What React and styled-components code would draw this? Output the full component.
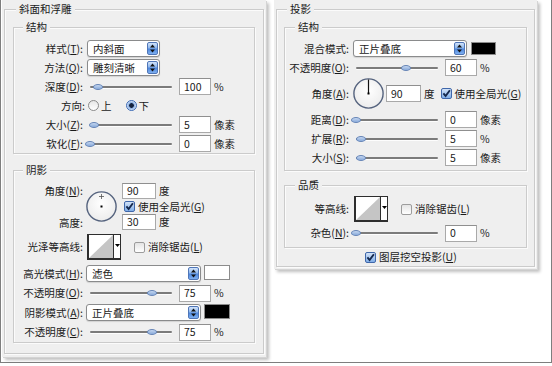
import React from 'react';
import styled, { createGlobalStyle } from 'styled-components';

const Global = createGlobalStyle`
  html, body { margin: 0; padding: 0; background: #fff; }
  body {
    font-family: "Noto Sans CJK SC", "Liberation Sans", sans-serif;
    font-size: 10.5px;
    line-height: 14px;
    color: #1a1a1a;
  }
`;

const Frame = styled.div`
  width: 552px;
  height: 363px;
  box-sizing: border-box;
  border: 1px solid #7e7e7e;
  border-top: none;
  display: flex;
  align-items: flex-start;
  gap: 8px;
  padding-left: 1px;
  background: #fff;
`;

const Panel = styled.div`
  width: ${(p) => p.$w}px;
  height: ${(p) => p.$h}px;
  box-sizing: border-box;
  flex: none;
  background: #efefef;
  padding: 1px 2px 0;
  box-shadow: 1px 1px 0 #d4d4d4, 3px 3px 3px rgba(0, 0, 0, 0.25);
`;

const Group = styled.fieldset`
  margin: ${(p) => p.$mt || 0}px 0 0;
  padding: ${(p) => p.$pad};
  border: 1px solid #cbcbcb;
  box-shadow: inset 1px 1px 0 #fbfbfb, 1px 1px 0 #fbfbfb;
  min-width: 0;
`;

const Title = styled.legend`
  padding: 0 3px;
  margin-left: ${(p) => p.$ml}px;
  line-height: 14px;
  font-size: 10.5px;
  background: #efefef;
`;

const Row = styled.div`
  display: flex;
  align-items: center;
  height: ${(p) => p.$h || 19}px;
  margin-top: ${(p) => p.$mt || 0}px;
  padding-left: ${(p) => p.$pl || 0}px;
`;

const Label = styled.span`
  flex: none;
  width: ${(p) => p.$w}px;
  margin-right: ${(p) => (p.$gap === undefined ? 4 : p.$gap)}px;
  text-align: right;
  white-space: nowrap;
`;

const Key = styled.span`
  text-decoration: underline;
`;

const SelectBox = styled.div`
  flex: none;
  width: ${(p) => p.$w}px;
  height: 17px;
  box-sizing: border-box;
  border: 1px solid #8a8b8c;
  border-radius: 3px;
  background: #fff;
  display: flex;
  align-items: center;
  justify-content: space-between;
  padding-left: 5px;
  box-shadow: 0 1px 1px rgba(0, 0, 0, 0.12);
  overflow: hidden;
  white-space: nowrap;
`;

const Stepper = styled.span`
  width: 11px;
  align-self: stretch;
  margin: 1px;
  border-radius: 2px;
  background: linear-gradient(#d3e4fa, #8db6ec 45%, #4d86dc 55%, #7fb0f0);
  border: 1px solid #4f76b8;
  box-sizing: border-box;
  display: flex;
  align-items: center;
  justify-content: center;
`;

const TextBox = styled.span`
  flex: none;
  width: ${(p) => p.$w || 32}px;
  height: ${(p) => p.$h || 17}px;
  box-sizing: border-box;
  margin-left: ${(p) => p.$ml || 0}px;
  border: 1px solid #a9a9a9;
  border-top-color: #8f8f8f;
  background: #fff;
  padding-left: 4px;
  display: flex;
  align-items: center;
`;

const Unit = styled.span`
  margin-left: ${(p) => p.$ml || 3}px;
  white-space: nowrap;
`;

const Slider = styled.div`
  position: relative;
  flex: none;
  width: 82px;
  height: 10px;
  margin: 0 7px 0 3px;
  &::before {
    content: '';
    position: absolute;
    left: 0;
    right: 0;
    top: 4px;
    height: 2px;
    border-radius: 1px;
    background: #7b7b7b;
    box-shadow: 0 1px 0 #fdfdfd;
  }
`;

const Thumb = styled.span`
  position: absolute;
  top: 2px;
  left: ${(p) => p.$x - 5}px;
  width: 10px;
  height: 6px;
  box-sizing: border-box;
  border-radius: 50%;
  background: linear-gradient(#c6d8f1, #88a9d9);
  border: 1px solid #6584b6;
`;

const Swatch = styled.span`
  flex: none;
  align-self: ${(p) => (p.$top ? 'flex-start' : 'center')};
  margin-top: ${(p) => (p.$top ? 1 : 0)}px;
  width: ${(p) => p.$w}px;
  height: ${(p) => p.$h}px;
  margin-left: ${(p) => p.$ml || 3}px;
  box-sizing: border-box;
  background: ${(p) => p.$color};
  border: 1px solid #8c8c8c;
`;

const Radio = styled.span`
  flex: none;
  width: 11px;
  height: 11px;
  box-sizing: border-box;
  border-radius: 50%;
  margin-left: ${(p) => p.$ml || 0}px;
  margin-right: 2px;
  border: 1px solid ${(p) => (p.$on ? '#3a69b5' : '#8a8a8a')};
  background: ${(p) =>
    p.$on
      ? 'radial-gradient(circle, #14233f 0 2px, #7fa6de 2.6px, #d6e5f8 4.5px)'
      : 'linear-gradient(#e6e6e6, #ffffff)'};
`;

const Check = styled.span`
  flex: none;
  width: 11px;
  height: 11px;
  box-sizing: border-box;
  border-radius: 2px;
  margin-left: ${(p) => p.$ml || 0}px;
  margin-right: 3px;
  border: 1px solid ${(p) => (p.$on ? '#3f67aa' : '#9c9c9c')};
  background: ${(p) =>
    p.$on ? 'linear-gradient(#d3e3f8, #80aee8)' : 'linear-gradient(#e4e4e4, #ffffff)'};
  display: flex;
  align-items: center;
  justify-content: center;
`;

const ContourBox = styled.div`
  flex: none;
  display: flex;
  width: 34px;
  height: 26px;
  box-sizing: border-box;
  border: 1px solid #2e2e2e;
  border-left-width: 2px;
  border-bottom-width: 2px;
  background: #fff;
`;

const ContourDrop = styled.span`
  width: 7px;
  border-left: 1px solid #2e2e2e;
  display: flex;
  justify-content: center;
  padding-top: 9px;
  box-sizing: border-box;
`;

const AngleBlock = styled.div`
  display: flex;
  align-items: center;
  height: 47px;
`;

const LabelCol = styled.div`
  flex: none;
  width: ${(p) => p.$w}px;
  margin-right: 3px;
  align-self: stretch;
  display: flex;
  flex-direction: column;
  justify-content: space-between;
  text-align: right;
  white-space: nowrap;
  padding: 1px 0 0;
  box-sizing: border-box;
`;

const FieldCol = styled.div`
  display: flex;
  flex-direction: column;
  margin-left: 5px;
  align-self: stretch;
`;

const DialWrap = styled.span`
  flex: none;
  width: 31px;
  height: 31px;
  display: block;
`;

const Arrows = () => (
  <svg width="5" height="9" viewBox="0 0 5 9">
    <polygon points="0,3.6 2.5,0.4 5,3.6" fill="#111" />
    <polygon points="0,5.4 2.5,8.6 5,5.4" fill="#111" />
  </svg>
);

const Select = ({ w, children }) => (
  <SelectBox $w={w}>
    <span>{children}</span>
    <Stepper>
      <Arrows />
    </Stepper>
  </SelectBox>
);

const Tick = () => (
  <svg width="9" height="9" viewBox="0 0 9 9">
    <path d="M1.4 4.4 L3.6 7 L7.9 1.2" stroke="#15284d" strokeWidth="1.9" fill="none" />
  </svg>
);

const Contour = () => (
  <ContourBox>
    <svg width="24" height="23" viewBox="0 0 24 23">
      <polygon points="0,23 24,0 24,23" fill="#c5c5c5" />
    </svg>
    <ContourDrop>
      <svg width="5" height="3" viewBox="0 0 5 3">
        <polygon points="0,0 5,0 2.5,3" fill="#000" />
      </svg>
    </ContourDrop>
  </ContourBox>
);

const Dial = ({ needle }) => (
  <DialWrap>
    <svg width="31" height="31" viewBox="0 0 31 31">
      <defs>
        <radialGradient id={needle ? 'dg2' : 'dg1'} cx="0.5" cy="0.4" r="0.6">
          <stop offset="0" stopColor="#ffffff" />
          <stop offset="1" stopColor="#ececec" />
        </radialGradient>
      </defs>
      <circle cx="15.5" cy="15.5" r="14.6" fill={`url(#${needle ? 'dg2' : 'dg1'})`} stroke="#55637e" strokeWidth="1.4" />
      {needle ? (
        <line x1="15.5" y1="15.5" x2="15.5" y2="1.5" stroke="#111" strokeWidth="1.2" />
      ) : (
        <g stroke="#555" strokeWidth="0.8">
          <line x1="15.5" y1="3" x2="15.5" y2="8" />
          <line x1="13" y1="5.5" x2="18" y2="5.5" />
        </g>
      )}
      <rect x="14.5" y="14.5" width="2" height="2" fill="#000" />
    </svg>
  </DialWrap>
);

const SliderRow = ({ label, lw, pos, value, unit, h, gap }) => (
  <Row $h={h}>
    <Label $w={lw} $gap={gap}>{label}</Label>
    <Slider>
      <Thumb $x={pos} />
    </Slider>
    <TextBox>{value}</TextBox>
    <Unit>{unit}</Unit>
  </Row>
);

export default function App() {
  return (
    <>
      <Global />
      <Frame>
        <Panel $w={264} $h={357}>
          <Group $mt={1} $pad="0 8px 10px">
            <Title $ml={3}>斜面和浮雕</Title>
            <Group $mt={4} $pad="5px 0 0">
              <Title $ml={9}>结构</Title>
              <Row>
                <Label $w={69}>样式(<Key>T</Key>):</Label>
                <Select w={73}>内斜面</Select>
              </Row>
              <Row>
                <Label $w={69}>方法(<Key>Q</Key>):</Label>
                <Select w={73}>雕刻清晰</Select>
              </Row>
              <SliderRow lw={69} label={<>深度(<Key>D</Key>):</>} pos={8} value="100" unit="%" />
              <Row>
                <Label $w={71} $gap={3}>方向:</Label>
                <Radio />
                <span>上</span>
                <Radio $on $ml={14} />
                <span>下</span>
              </Row>
              <SliderRow lw={69} label={<>大小(<Key>Z</Key>):</>} pos={4} value="5" unit="像素" />
              <SliderRow lw={69} label={<>软化(<Key>F</Key>):</>} pos={0} value="0" unit="像素" />
            </Group>
            <Group $mt={9} $pad="6px 0 0">
              <Title $ml={9}>阴影</Title>
              <AngleBlock>
                <LabelCol $w={69}>
                  <span>角度(<Key>N</Key>):</span>
                  <span>高度:</span>
                </LabelCol>
                <Dial />
                <FieldCol>
                  <Row $h={16}>
                    <TextBox $w={34} $h={16}>90</TextBox>
                    <Unit>度</Unit>
                  </Row>
                  <Row $h={15}>
                    <Check $on $ml={2}>
                      <Tick />
                    </Check>
                    <span>使用全局光(<Key>G</Key>)</span>
                  </Row>
                  <Row $h={16}>
                    <TextBox $w={34} $h={16}>30</TextBox>
                    <Unit>度</Unit>
                  </Row>
                </FieldCol>
              </AngleBlock>
              <Row $h={26} $mt={4}>
                <Label $w={69}>光泽等高线:</Label>
                <Contour />
                <Check $ml={13} />
                <span>消除锯齿(<Key>L</Key>)</span>
              </Row>
              <Row $h={19.5} $mt={4}>
                <Label $w={69} $gap={3}>高光模式(<Key>H</Key>):</Label>
                <Select w={115}>滤色</Select>
                <Swatch $w={26} $h={15} $color="#fff" $top />
              </Row>
              <SliderRow h={19.5} lw={69} label={<>不透明度(<Key>O</Key>):</>} pos={62} value="75" unit="%" />
              <Row $h={19.5}>
                <Label $w={69} $gap={3}>阴影模式(<Key>A</Key>):</Label>
                <Select w={115}>正片叠底</Select>
                <Swatch $w={26} $h={15} $color="#000" $top />
              </Row>
              <SliderRow h={19.5} lw={69} label={<>不透明度(<Key>C</Key>):</>} pos={62} value="75" unit="%" />
            </Group>
          </Group>
        </Panel>

        <Panel $w={263} $h={269}>
          <Group $mt={1} $pad="0 7px 0">
            <Title $ml={3}>投影</Title>
            <Group $mt={4} $pad="5px 0 3px">
              <Title $ml={10}>结构</Title>
              <Row>
                <Label $w={64}>混合模式:</Label>
                <Select w={114}>正片叠底</Select>
                <Swatch $w={25} $h={13} $color="#000" $ml={4} />
              </Row>
              <SliderRow lw={64} label={<>不透明度(<Key>O</Key>):</>} pos={50} value="60" unit="%" />
              <Row $h={33}>
                <Label $w={64}>角度(<Key>A</Key>):</Label>
                <Dial needle />
                <TextBox $w={35} $ml={2}>90</TextBox>
                <Unit>度</Unit>
                <Check $on $ml={6}>
                  <Tick />
                </Check>
                <span>使用全局光(<Key>G</Key>)</span>
              </Row>
              <SliderRow lw={64} label={<>距离(<Key>D</Key>):</>} pos={0} value="0" unit="像素" />
              <SliderRow lw={64} label={<>扩展(<Key>R</Key>):</>} pos={5} value="5" unit="%" />
              <SliderRow lw={64} label={<>大小(<Key>S</Key>):</>} pos={5} value="5" unit="像素" />
            </Group>
            <Group $mt={7} $pad="3px 0 4px">
              <Title $ml={10}>品质</Title>
              <Row $h={28}>
                <Label $w={64} $gap={5}>等高线:</Label>
                <Contour />
                <Check $ml={13} />
                <span>消除锯齿(<Key>L</Key>)</span>
              </Row>
              <SliderRow h={20} lw={64} label={<>杂色(<Key>N</Key>):</>} pos={0} value="0" unit="%" />
            </Group>
            <Row $h={18} $pl={81}>
              <Check $on>
                <Tick />
              </Check>
              <span>图层挖空投影(<Key>U</Key>)</span>
            </Row>
          </Group>
        </Panel>
      </Frame>
    </>
  );
}
